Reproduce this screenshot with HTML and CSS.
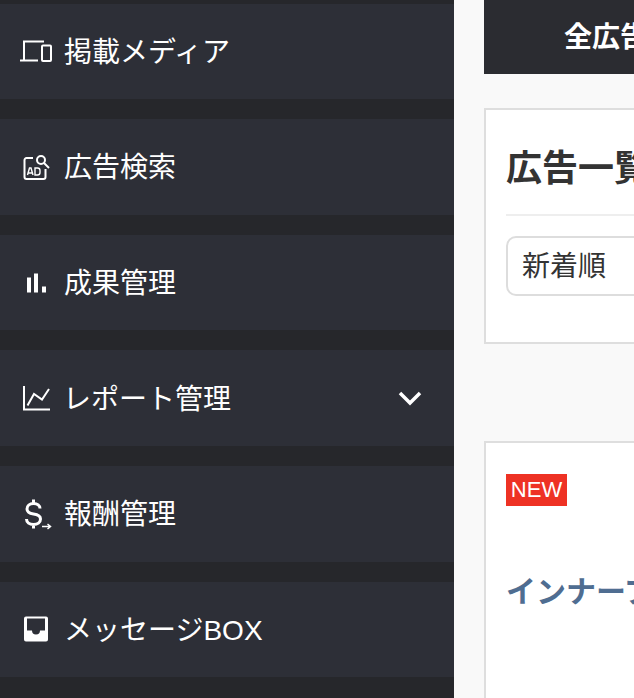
FILE: index.html
```html
<!DOCTYPE html>
<html lang="ja">
<head>
<meta charset="utf-8">
<title>広告一覧</title>
<link rel="stylesheet" href="styles.css">
</head>
<body>
<div class="layout">
  <nav class="sidebar">
    <a class="item"><svg class="icon" viewBox="0 0 32 24"><path d="M4 21V2.500h20M0 21.500h18" fill="none" stroke="#fff" stroke-width="2"/><rect x="22" y="6.500" width="9" height="15.500" rx="1" fill="#2d2f37" stroke="#fff" stroke-width="2"/></svg><span class="label">掲載メディア</span></a>
    <a class="item"><svg class="icon" viewBox="0 0 32 24"><path d="M13 3H6.500a2 2 0 0 0-2 2v17a2 2 0 0 0 2 2h17a2 2 0 0 0 2-2V14" fill="none" stroke="#fff" stroke-width="2"/><circle cx="21" cy="5" r="4" fill="none" stroke="#fff" stroke-width="2"/><path d="M24 8l5 5" stroke="#fff" stroke-width="2"/><path d="M7.500 20l2-7h1.500l2 7M8.300 18h3.900M15 13v7h2.500a2.500 2.500 0 0 0 2.500-2.500v-2a2.500 2.500 0 0 0-2.500-2.500z" fill="none" stroke="#fff" stroke-width="1.400"/></svg><span class="label">広告検索</span></a>
    <a class="item"><svg class="icon" viewBox="0 0 32 24"><path d="M7 6.500h4v15H7zM14 2.500h4v19h-4zM22 15.500h4v6h-4z" fill="#fff"/></svg><span class="label">成果管理</span></a>
    <a class="item"><svg class="icon" viewBox="0 0 32 24"><path d="M4 0v23.500h26M7.500 19.500L14 8l8 5.500L29 3" fill="none" stroke="#fff" stroke-width="2"/></svg><span class="label shift">レポート管理</span><svg class="chevron" viewBox="0 0 24 16"><path d="M2 3l10 10L22 3" fill="none" stroke="#fff" stroke-width="3.500"/></svg></a>
    <a class="item"><svg class="icon" viewBox="0 0 32 24"><path d="M20 6.500C20 3.500 17.500 1.500 13.500 1.500C9.500 1.500 7 4 7 7C7 10.500 10 11.500 13.500 12C17 12.500 20.500 13.500 20.500 17C20.500 20.500 17.500 22.500 13.500 22.500C9.500 22.500 6.500 20.500 6.500 17M13.500 -2.500V1.500M13.500 22.500V26.500" fill="none" stroke="#fff" stroke-width="3"/><path d="M22 24.500h8M27.500 22l3 2.500-3 2.500" fill="none" stroke="#fff" stroke-width="1.500"/></svg><span class="label">報酬管理</span></a>
    <a class="item"><svg class="icon" viewBox="0 0 32 24"><path d="M6 -0.500h20a2 2 0 0 1 2 2v21a2 2 0 0 1-2 2H6a2 2 0 0 1-2-2v-21a2 2 0 0 1 2-2zM7 1.500v12h5a4 4 0 0 0 8 0h5v-12z" fill="#fff" fill-rule="evenodd"/></svg><span class="label">メッセージBOX</span></a>
  </nav>
  <main class="main">
    <header class="topbar">全広告</header>
    <section class="card filter">
      <h1 class="heading">広告一覧</h1>
      <div class="select">新着順</div>
    </section>
    <section class="card ad-card">
      <span class="badge">NEW</span>
      <h2 class="ad-title">インナーブ</h2>
    </section>
  </main>
</div>
</body>
</html>
```
FILE: styles.css
```css
* { box-sizing: border-box; }
html, body { margin: 0; height: 698px; overflow: hidden; }
body { font-family: "Liberation Sans", "Noto Sans CJK JP", sans-serif; background: #f9f9f9; }
.layout { display: flex; width: 634px; height: 698px; overflow: hidden; }
.sidebar { flex: 0 0 454px; height: 698px; padding-top: 3.6px; background: #26272b; }
.item { display: flex; align-items: center; height: 95.6px; margin-bottom: 20px; padding: 0 32px 0 20px; background: #2d2f37; color: #fff; font-size: 28px; line-height: 1; }
.icon { flex: 0 0 32px; width: 32px; height: 24px; margin-right: 12px; overflow: visible; }
.label { padding-top: 3px; white-space: nowrap; }
.shift { margin-left: -1px; }
.chevron { width: 24px; height: 16px; margin-left: auto; }
.main { flex: 0 0 auto; width: 500px; margin-left: 30px; }
.topbar { height: 74px; padding: 20px 0 0 80px; background: #2b2c31; color: #fff; font-size: 28px; font-weight: 700; line-height: 36px; white-space: nowrap; }
.card { width: 500px; background: #fff; border: 2px solid #dedede; padding: 0 20px; }
.filter { height: 236px; margin-top: 34px; }
.heading { margin: 0; height: 106px; padding-top: 39px; border-bottom: 2px solid #eee; color: #333; font-size: 36px; font-weight: 700; line-height: 40px; white-space: nowrap; }
.select { width: 400px; height: 60px; margin-top: 20px; padding-left: 14px; border: 2px solid #ddd; border-radius: 10px; color: #333; font-size: 28px; line-height: 58px; }
.ad-card { height: 400px; margin-top: 97px; padding-top: 31px; }
.badge { display: block; width: 61px; height: 32px; background: #ee3224; color: #fff; font-size: 22px; line-height: 32px; text-align: center; }
.ad-title { margin: 66px 0 0; color: #4f6d91; font-size: 30px; font-weight: 700; line-height: 40px; white-space: nowrap; }
```
